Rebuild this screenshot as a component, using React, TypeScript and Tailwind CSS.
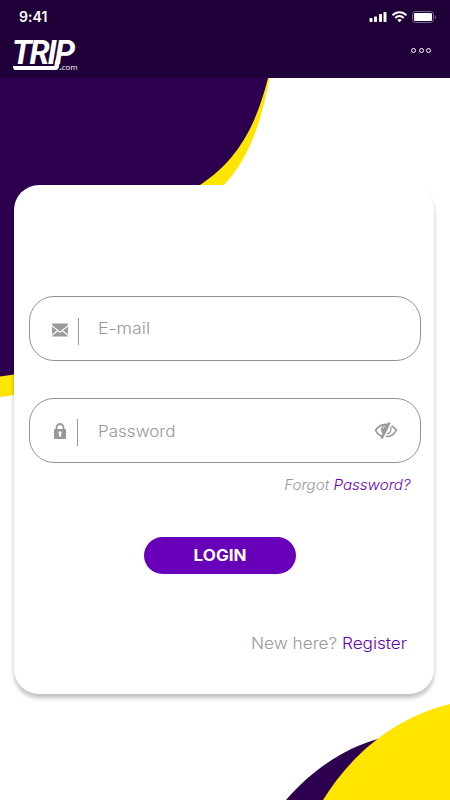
import React from "react";

function Backdrop() {
  return (
    <svg className="absolute inset-0 h-[800px] w-[450px]" viewBox="0 0 450 800" aria-hidden="true">
      <path d="M0 78H269.5C262 119 250 158 224 185L150 260V372L14 395L0 397Z" fill="#ffe500" />
      <path d="M0 78H268C258 117 243 157 200 185L100 250V359L14 374.500L0 376.500Z" fill="#2d004f" />
      <path d="M286 800C312 770 344 748 381 738L420 760V800Z" fill="#2d004f" />
      <path d="M323 800C351 755 393 718 450 704V800Z" fill="#ffe500" />
    </svg>
  );
}

function Logo() {
  return (
    <svg className="ml-3 h-[34px] w-[70px] overflow-visible" viewBox="12 38 70 34" aria-label="TRIP.com" fill="white">
      <text x="12" y="63.500" fontFamily="Roboto, sans-serif" fontSize="32.500" fontWeight="700" fontStyle="italic" textLength="63" lengthAdjust="spacing">TRIP</text>
      <path d="M13 66H54.300L55.500 60H60L58.800 67.500Q58.200 70 55.500 70H15.500Q13 70 13 66Z" />
      <text x="59.500" y="70" fontFamily="'Open Sans', sans-serif" fontSize="8" textLength="18" lengthAdjust="spacingAndGlyphs"><tspan fontWeight="700">.</tspan>com</text>
    </svg>
  );
}

function StatusIcons() {
  return (
    <svg className="h-[14px] w-[70px]" viewBox="368 10 70 14" fill="white" aria-hidden="true">
      <rect x="369.500" y="18" width="3" height="4" rx=".8" />
      <rect x="374" y="16.500" width="3" height="5.500" rx=".8" />
      <rect x="379" y="14" width="3" height="8" rx=".8" />
      <rect x="383.500" y="12" width="3" height="10" rx=".8" />
      <g fill="none" stroke="white" strokeWidth="2">
        <path d="M392.500 15.300C396.500 11.200 402.500 11.200 406.500 15.300" />
        <path d="M395.300 18C397.800 15.400 401.200 15.400 403.700 18" />
      </g>
      <path d="M397.300 20Q399.500 18.200 401.700 20L399.500 22.300Z" />
      <rect x="412.500" y="11.500" width="21" height="11" rx="3" fill="none" stroke="#776784" />
      <rect x="414" y="13" width="18" height="8" rx="1.300" />
      <path d="M435 15Q437 17 435 19Z" fill="#8b7d96" />
    </svg>
  );
}

function MailIcon() {
  return (
    <svg className="h-[14px] w-4" viewBox="0 0 16 14" fill="#999" aria-hidden="true">
      <path d="M.5 .5H15.500Q16 .5 16 1.500V2L8 8.500L0 2V1.500Q0 .5 .5 .5Z" />
      <path d="M0 3.500L5 7.500L0 11.500ZM16 3.500L11 7.500L16 11.500ZM0 13L6 8.300L8 9.900L10 8.300L16 13Q16 13.500 15 13.500H1Q0 13.500 0 13Z" />
    </svg>
  );
}

function LockIcon() {
  return (
    <svg className="h-4 w-3" viewBox="0 0 12 16" aria-hidden="true">
      <path d="M2.500 7V4.500A3.500 3.500 0 0 1 9.500 4.500V7" fill="none" stroke="#999" strokeWidth="1.800" />
      <rect y="6" width="12" height="10" rx="1" fill="#999" />
      <path d="M4.500 9.700A1.500 1.500 0 1 1 7 10.800L7.300 13.500H4.900L5.200 10.800Q4.500 10.400 4.500 9.700Z" fill="white" />
    </svg>
  );
}

function HiddenEye() {
  return (
    <svg className="h-[18px] w-6" viewBox="0 0 24 18" fill="none" stroke="#999" strokeWidth="1.600" aria-hidden="true">
      <path d="M14.500 2.700C9 1.500 4.500 4 1.600 8.300C3.300 11.500 5.500 13.500 8.500 14.300M17.500 3.700C19.600 4.800 21 6.300 22.400 8.300C19.800 12.800 16 14.800 11.800 14.500" />
      <path d="M15.500 .5L7.500 16.500" strokeWidth="2.600" />
      <path d="M13.500 3C9.500 2 7 4.200 7 7.500C7 9.500 8 11 9.200 12Z" fill="#999" stroke="none" />
      <path d="M16.500 5C18 8 16.500 11 13 12.200" strokeWidth="1.300" />
      <path d="M8.800 6.500Q9 4.500 11 4.300" stroke="white" strokeWidth=".8" />
    </svg>
  );
}

export default function App() {
  return (
    <main className="relative h-[800px] w-[450px] overflow-hidden bg-white font-['Inter',sans-serif] text-[#999]">
      <Backdrop />
      <header className="relative h-[78px] bg-[#200038] text-white">
        <div className="flex h-[34px] items-center justify-between pr-3 pl-[19px]">
          <span className="text-[14px] leading-5 font-semibold tracking-[0.1px]">9:41</span>
          <StatusIcons />
        </div>
        <div className="flex items-start justify-between pt-1">
          <Logo />
          <button className="mt-[10px] mr-[19px] flex gap-[2.5px]" aria-label="Menu">
            <span className="size-[5px] rounded-full border border-white" />
            <span className="size-[5px] rounded-full border border-white" />
            <span className="size-[5px] rounded-full border border-white" />
          </button>
        </div>
      </header>
      <section className="relative mt-[107px] ml-[14px] h-[509px] w-[420px] rounded-[25px] bg-white pt-[111px] pr-[13px] pl-[15px] shadow-[0_4px_4px_rgba(0,0,0,0.25)]">
        <label className="flex h-[65px] items-center rounded-[25px] border border-[#929292]">
          <span className="ml-[22px] flex w-[26px] items-center pt-[3px]"><MailIcon /></span>
          <span className="mt-[6px] h-[27px] w-px bg-[#999]" />
          <span className="-mt-px ml-[18.5px] origin-left scale-x-[1.11] text-[16px] font-light">E-mail</span>
        </label>
        <label className="mt-[37px] flex h-[65px] items-center rounded-[25px] border border-[#929292]">
          <span className="ml-[24px] flex w-[23px] items-center pt-px"><LockIcon /></span>
          <span className="mt-[3px] h-[27px] w-px bg-[#999]" />
          <span className="ml-[19.5px] origin-left scale-x-[1.065] pt-px text-[16px] font-light">Password</span>
          <span className="mr-[22px] ml-auto"><HiddenEye /></span>
        </label>
        <p className="mt-[12px] mr-[10.5px] origin-right scale-x-[1.08] text-right text-[14px] leading-5 font-light italic">Forgot <span className="text-[#6900b9]">Password?</span></p>
        <button className="mt-[42px] ml-[115px] flex h-[37px] w-[152px] items-center justify-center rounded-full bg-[#6900b9] pt-px text-[15.5px] font-bold text-white"><span className="scale-x-[1.1]">LOGIN</span></button>
        <p className="mt-[57px] mr-[14px] origin-right scale-x-[1.075] text-right text-[16px] leading-6 font-light">New here? <span className="text-[#6900b9]">Register</span></p>
      </section>
    </main>
  );
}
